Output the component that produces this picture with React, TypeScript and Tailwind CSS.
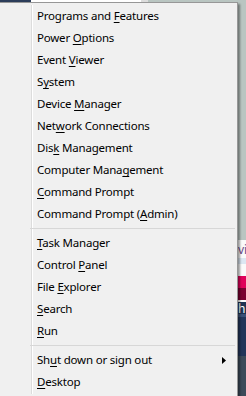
import { ReactNode } from 'react'

type Item = { pre: string; key: string; post: string; sub?: boolean }

const groups: Item[][] = [
  [
    { pre: 'Programs and ', key: 'F', post: 'eatures' },
    { pre: 'Power ', key: 'O', post: 'ptions' },
    { pre: 'Event ', key: 'V', post: 'iewer' },
    { pre: 'S', key: 'y', post: 'stem' },
    { pre: 'Device ', key: 'M', post: 'anager' },
    { pre: 'Net', key: 'w', post: 'ork Connections' },
    { pre: 'Dis', key: 'k', post: ' Management' },
    { pre: 'Computer Mana', key: 'g', post: 'ement' },
    { pre: '', key: 'C', post: 'ommand Prompt' },
    { pre: 'Command Prompt (', key: 'A', post: 'dmin)' },
  ],
  [
    { pre: '', key: 'T', post: 'ask Manager' },
    { pre: 'Control ', key: 'P', post: 'anel' },
    { pre: 'File ', key: 'E', post: 'xplorer' },
    { pre: '', key: 'S', post: 'earch' },
    { pre: '', key: 'R', post: 'un' },
  ],
  [
    { pre: 'Sh', key: 'u', post: 't down or sign out', sub: true },
    { pre: '', key: 'D', post: 'esktop' },
  ],
]

function Row({ item }: { item: Item }) {
  return (
    <div className="h-[22px] flex items-center pl-[3px] text-black">
      <span>
        {item.pre}
        <span className="underline underline-offset-[2px] decoration-1">{item.key}</span>
        {item.post}
      </span>
      {item.sub && (
        <svg className="ml-auto mr-[11px]" width="4" height="7" viewBox="0 0 4 7">
          <path d="M0 0 L4 3.5 L0 7 Z" fill="#000" />
        </svg>
      )}
    </div>
  )
}

function Sep() {
  return (
    <div className="h-[7px] flex items-center -ml-[4px] mr-[2px]">
      <div className="h-px w-full bg-[#d7d7d7]" />
    </div>
  )
}

function Block({ h, c, children }: { h: string; c: string; children?: ReactNode }) {
  return <div className={`${h} ${c} overflow-hidden leading-none`}>{children}</div>
}

export default function App() {
  return (
    <div
      className="w-[246px] h-[396px] overflow-hidden flex flex-col bg-[#b9c5c1] text-[11.5px] tracking-[-0.2px]"
      style={{ fontFamily: '"Noto Sans", "Open Sans", sans-serif' }}
    >
      {/* desktop behind, top edge */}
      <div className="h-[2px] flex shrink-0">
        <div className="w-[31px] bg-[#2c3d5a]" />
        <div className="w-[110px] bg-white" />
        <div className="w-[7px] bg-[#dcdcdc]" />
        <div className="flex-1 bg-[#b9c5c1]" />
      </div>

      <div className="flex flex-1 min-h-0">
        {/* menu */}
        <div className="w-[238px] shrink-0 bg-[#f0f0f0] border-t border-r border-[#979797] flex pt-[2px] pb-[2px] shadow-[2px_2px_2px_rgba(0,0,0,0.4)] relative z-10">
          <div className="w-[32px] shrink-0 border-r border-[#dcdcdc]" />
          <div className="flex-1 flex flex-col border-l border-white pl-[1px]">
            {groups.map((g, i) => (
              <div key={i}>
                {i > 0 && <Sep />}
                {g.map((it) => (
                  <Row key={it.pre + it.key} item={it} />
                ))}
              </div>
            ))}
          </div>
        </div>

        {/* window edges peeking out on the right */}
        <div className="flex-1 flex flex-col">
          <Block h="h-[239px]" c="bg-[#b9c5c1]" />
          <Block h="h-[18px]" c="bg-[#fafafa] text-[#6b4a8a] text-[12px] pt-[4px]">vie</Block>
          <Block h="h-[6px]" c="bg-[#dce7f2]" />
          <Block h="h-[12px]" c="bg-[#fafafa]" />
          <Block h="h-[12px]" c="bg-[#e0005a]" />
          <Block h="h-[12px]" c="bg-[#7a0030]" />
          <Block h="h-[2px]" c="bg-[#fafafa]" />
          <Block h="h-[12px]" c="bg-[#1f3253] text-white text-[12px] pt-[1px]">h</Block>
          <Block h="h-[3px]" c="bg-[#3a5077]" />
          <Block h="h-[39px]" c="bg-[#22355a]" />
          <Block h="h-[40px]" c="bg-[#3c4a5a]" />
        </div>
      </div>
    </div>
  )
}
